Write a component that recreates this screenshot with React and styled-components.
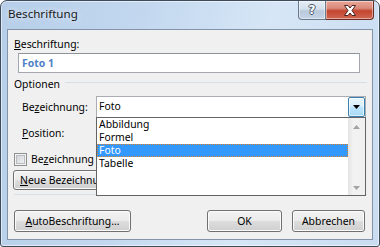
import React from 'react';
import styled, { createGlobalStyle } from 'styled-components';

const GlobalStyle = createGlobalStyle`
  html, body {
    margin: 0;
    padding: 0;
    background: #ffffff;
  }
  body {
    font-family: "Segoe UI", "Noto Sans", "Open Sans", sans-serif;
    font-size: 10.4px;
    color: #000;
  }
`;

const Window = styled.div`
  position: relative;
  width: 380px;
  height: 247px;
  box-sizing: border-box;
  border: 1px solid #3e4b5a;
  border-radius: 7px 7px 3px 3px;
  background: linear-gradient(100deg, #b6cee9 0%, #c3d8ef 35%, #d6e6f6 65%, #c9dcf1 100%);
  box-shadow: inset 0 0 0 1px rgba(255, 255, 255, 0.55);
  display: flex;
  flex-direction: column;
  overflow: hidden;
`;

const TitleBar = styled.div`
  height: 28px;
  display: flex;
  align-items: flex-start;
  padding-left: 7px;
  padding-right: 5px;
`;

const Title = styled.div`
  flex: 1;
  font-size: 11.6px;
  line-height: 26px;
  color: #1a1a1a;
  text-shadow: 0 0 6px rgba(255, 255, 255, 0.9);
`;

const CaptionButton = styled.div`
  width: ${p => p.w}px;
  height: 19px;
  box-sizing: border-box;
  border: 1px solid ${p => (p.close ? '#6d2a22' : '#6a7a8e')};
  border-top: none;
  display: flex;
  align-items: center;
  justify-content: center;
  background: ${p =>
    p.close
      ? 'linear-gradient(#eaa597 0%, #d98a7a 40%, #c4452f 55%, #cf6651 100%)'
      : 'linear-gradient(#e6edf5 0%, #d3dfec 45%, #b9c9dc 55%, #c5d4e5 100%)'};
  box-shadow: inset 0 0 0 1px rgba(255, 255, 255, 0.45);
  border-radius: ${p => (p.close ? '0 0 4px 0' : '0 0 0 4px')};
  ${p => (p.close ? 'border-left: none;' : '')}
`;

const HelpGlyph = styled.span`
  font-family: "DejaVu Sans", sans-serif;
  font-weight: bold;
  font-size: 12px;
  line-height: 12px;
  color: #ffffff;
  text-shadow: 1px 0 #4a5566, -1px 0 #4a5566, 0 1px #4a5566, 0 -1px #4a5566;
`;

const Client = styled.div`
  flex: 1;
  margin: 0 6px 6px;
  border: 1px solid #8394a8;
  background: #f0f0f0;
  display: flex;
  flex-direction: column;
  padding-top: 6px;
`;

const Label = styled.div`
  line-height: 16px;
  padding-left: ${p => p.indent || 0}px;
  white-space: nowrap;
`;

const TextBox = styled.div`
  margin: 1px 0 0 10px;
  width: 342px;
  height: 20px;
  box-sizing: border-box;
  border: 1px solid #a4a8ae;
  border-top-color: #8f949a;
  background: #ffffff;
  padding-left: 3px;
  line-height: 18px;
  font-weight: bold;
  color: #4f81c7;
`;

const GroupHeader = styled.div`
  margin-top: 3px;
  height: 16px;
  display: flex;
  align-items: flex-start;
  padding: 0 5px 0 6px;
  gap: 5px;
  line-height: 16px;
`;

const GroupLine = styled.div`
  flex: 1;
  height: 1px;
  margin-top: 6px;
  background: #d5dfe5;
`;

const Row = styled.div`
  margin-top: ${p => p.top}px;
  height: 22px;
  display: flex;
  align-items: center;
  padding-left: 14px;
`;

const RowLabel = styled.div`
  width: 74px;
  white-space: nowrap;
`;

const Select = styled.div`
  position: relative;
  width: 270px;
  height: 22px;
  box-sizing: border-box;
  border: 1px solid #abadb3;
  background: #ffffff;
  display: flex;
  align-items: stretch;
`;

const SelectValue = styled.div`
  flex: 1;
  padding-left: 2px;
  line-height: 19px;
`;

const DropButton = styled.div`
  width: 17px;
  height: 20px;
  box-sizing: border-box;
  border: 1px solid #3c7fb1;
  border-radius: 2px;
  background: linear-gradient(#eaf6fd 0%, #d9f0fc 45%, #bee6fd 50%, #a7d9f5 100%);
  box-shadow: inset 0 0 0 1px rgba(255, 255, 255, 0.6);
  display: flex;
  align-items: center;
  justify-content: center;
`;

const DropList = styled.div`
  position: absolute;
  left: -1px;
  top: 20px;
  width: 270px;
  height: 79px;
  box-sizing: border-box;
  border: 1px solid #646464;
  background: #ffffff;
  display: flex;
  z-index: 5;
`;

const Items = styled.div`
  flex: 1;
`;

const Item = styled.div`
  height: 13px;
  line-height: 13px;
  padding-left: 2px;
  box-sizing: border-box;
  color: ${p => (p.selected ? '#ffffff' : '#000000')};
  background: ${p => (p.selected ? '#3399ff' : 'transparent')};
  outline: ${p => (p.selected ? '1px dotted #e0822c' : 'none')};
  outline-offset: -1px;
`;

const ScrollBar = styled.div`
  width: 17px;
  background: linear-gradient(90deg, #e3e3e3 0%, #f2f2f2 30%, #f0f0f0 100%);
  display: flex;
  flex-direction: column;
  justify-content: space-between;
  align-items: center;
  padding: 7px 0 5px;
  box-sizing: border-box;
`;

const CheckRow = styled.div`
  margin-top: 7px;
  height: 16px;
  display: flex;
  align-items: center;
  padding-left: 6px;
  gap: 4px;
  white-space: nowrap;
`;

const CheckBox = styled.div`
  width: 13px;
  height: 13px;
  box-sizing: border-box;
  border: 1px solid #8e8f8f;
  background: linear-gradient(135deg, #c9cdd3 0%, #e6e7e9 60%, #f6f6f6 100%);
  box-shadow: inset 0 0 0 1px #f4f4f4, inset 0 0 0 2px #b9bcc1;
`;

const Button = styled.div`
  width: ${p => p.w}px;
  height: ${p => p.h || 22}px;
  box-sizing: border-box;
  border: 1px solid #707070;
  border-radius: 3px;
  background: linear-gradient(#f2f2f2 0%, #ebebeb 50%, #dddddd 50%, #cfcfcf 100%);
  box-shadow: inset 0 0 0 1px #fbfbfb;
  display: flex;
  align-items: center;
  justify-content: ${p => (p.left ? 'flex-start' : 'center')};
  padding-left: ${p => (p.left ? 6 : 0)}px;
  white-space: nowrap;
`;

const ButtonRow = styled.div`
  margin-top: 3px;
  display: flex;
  gap: 6px;
  padding-left: 5px;
`;

const Separator = styled.div`
  margin: 4px 5px 0 6px;
  height: 1px;
  background: #d5dfe5;
`;

const Footer = styled.div`
  margin-top: 15px;
  display: flex;
  justify-content: space-between;
  padding: 0 7px 0 6px;
`;

const FooterGroup = styled.div`
  display: flex;
  gap: 10px;
`;

const Arrow = ({ up, color = '#000' }) => (
  <svg width="7" height="4" viewBox="0 0 7 4">
    <polygon points={up ? '3.5,0 7,4 0,4' : '0,0 7,0 3.5,4'} fill={color} />
  </svg>
);

const CloseGlyph = () => (
  <svg width="14" height="11" viewBox="0 0 14 11">
    <path
      d="M1.5 0.5 H5 L7 3 L9 0.5 H12.5 L9 5.5 L12.5 10.5 H9 L7 8 L5 10.5 H1.5 L5 5.5 Z"
      fill="#ffffff"
      stroke="#4a2520"
      strokeWidth="1"
      strokeLinejoin="round"
    />
  </svg>
);

const items = ['Abbildung', 'Formel', 'Foto', 'Tabelle'];

export default function App() {
  return (
    <>
      <GlobalStyle />
      <Window>
        <TitleBar>
          <Title>Beschriftung</Title>
          <CaptionButton w={28}>
            <HelpGlyph>?</HelpGlyph>
          </CaptionButton>
          <CaptionButton w={48} close>
            <CloseGlyph />
          </CaptionButton>
        </TitleBar>
        <Client>
          <Label indent={6}>
            <u>B</u>eschriftung:
          </Label>
          <TextBox>Foto 1</TextBox>

          <GroupHeader>
            <span>Optionen</span>
            <GroupLine />
          </GroupHeader>

          <Row top={4}>
            <RowLabel>
              Be<u>z</u>eichnung:
            </RowLabel>
            <Select>
              <SelectValue>Foto</SelectValue>
              <DropButton>
                <Arrow />
              </DropButton>
              <DropList>
                <Items>
                  {items.map(it => (
                    <Item key={it} selected={it === 'Foto'}>
                      {it}
                    </Item>
                  ))}
                </Items>
                <ScrollBar>
                  <Arrow up color="#a3a3a3" />
                  <Arrow color="#a3a3a3" />
                </ScrollBar>
              </DropList>
            </Select>
          </Row>

          <Row top={4}>
            <RowLabel>
              <u>P</u>osition:
            </RowLabel>
            <Select />
          </Row>

          <CheckRow>
            <CheckBox />
            <span>
              Be<u>z</u>eichnung nicht verwenden
            </span>
          </CheckRow>

          <ButtonRow>
            <Button w={118} h={20} left>
              <span>
                <u>N</u>eue Bezeichnung...
              </span>
            </Button>
          </ButtonRow>

          <Separator />

          <Footer>
            <Button w={117}>
              <span>
                <u>A</u>utoBeschriftung...
              </span>
            </Button>
            <FooterGroup>
              <Button w={75}>OK</Button>
              <Button w={73}>Abbrechen</Button>
            </FooterGroup>
          </Footer>
        </Client>
      </Window>
    </>
  );
}
